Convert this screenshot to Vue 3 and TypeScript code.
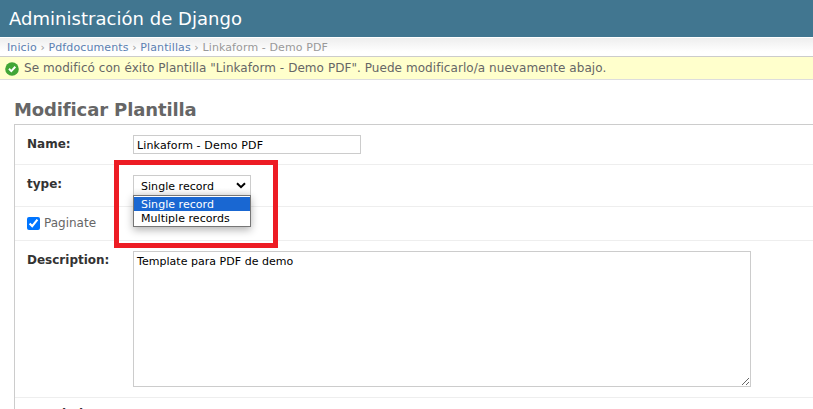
<script setup lang="ts">
import { ref } from 'vue'

const name = ref('Linkaform - Demo PDF')
const description = ref('Template para PDF de demo')
const paginate = ref(true)
const options: string[] = ['Single record', 'Multiple records']
const selected = ref(options[0])
const crumbs: string[] = ['Inicio', 'Pdfdocuments', 'Plantillas']
</script>

<template>
  <div class="page">
    <header class="header"><h1 class="brand">Administración de Django</h1></header>
    <nav class="breadcrumbs">
      <span class="trail"><template v-for="crumb in crumbs" :key="crumb"><a>{{ crumb }}</a> › </template>Linkaform - Demo PDF</span>
    </nav>
    <div class="message">
      <svg class="ok" viewBox="0 0 14 14" width="14" height="14">
        <circle cx="7" cy="7" r="6.8" fill="#41a637" />
        <path d="M4 6.8 6.3 9.1 10.3 4.8" fill="none" stroke="#fff" stroke-width="2" />
      </svg>
      <span class="message-text">Se modificó con éxito Plantilla "Linkaform - Demo PDF". Puede modificarlo/a nuevamente abajo.</span>
    </div>
    <main class="content">
      <h2 class="title"><span>Modificar Plantilla</span></h2>
      <form class="module">
        <div class="row row-name">
          <label class="label">Name:</label>
          <input v-model="name" class="text-input" type="text" spellcheck="false" />
        </div>
        <div class="row row-type">
          <label class="label">type:</label>
          <div class="select">
            <div class="select-box">
              <span class="single">{{ selected }}</span>
              <svg class="chevron" viewBox="0 0 10 7" width="10" height="7">
                <path d="M1 1.2 5 5.2 9 1.2" fill="none" stroke="#000" stroke-width="2" />
              </svg>
            </div>
            <ul class="menu">
              <li v-for="option in options" :key="option" :class="{ active: option === selected }">{{ option }}</li>
            </ul>
            <div class="highlight"></div>
          </div>
        </div>
        <div class="row row-paginate">
          <input v-model="paginate" class="check" type="checkbox" />
          <label class="check-label">Paginate</label>
        </div>
        <div class="row row-description">
          <label class="label">Description:</label>
          <textarea v-model="description" class="area" spellcheck="false"></textarea>
        </div>
        <div class="row row-last">
          <label class="label">margin i:</label>
        </div>
      </form>
    </main>
  </div>
</template>

<style>
body { overflow: hidden; }
</style>

<style scoped>
.page {
  height: 409px;
  overflow: hidden;
  background: #fff;
  color: #666;
  font: 12px/14px "DejaVu Sans", sans-serif;
}
.header { height: 37px; background: #417690; color: #fff; }
.brand { margin: 0; padding: 8px 0 0 9px; font-size: 18px; line-height: 22px; font-weight: 400; letter-spacing: 0.03px; }
.breadcrumbs {
  box-sizing: border-box;
  height: 20px;
  padding: 3px 7px 0;
  border-top: 1px solid #fff;
  border-bottom: 1px solid #ccc;
  background: linear-gradient(#eee, #fff 14px);
  color: #999;
  font-size: 11px;
  line-height: 13px;
  letter-spacing: 0.11px;
  white-space: nowrap;
}
.breadcrumbs a { color: #5b80b2; }
.message {
  box-sizing: border-box;
  display: flex;
  height: 23px;
  padding: 4px 5px 0;
  border-bottom: 1px solid #ddd;
  background: #ffc;
  letter-spacing: 0.058px;
  white-space: nowrap;
}
.ok { flex: none; margin: 1px 5px 0 0; }
.content { padding: 20px 0 0 14px; }
.title { margin: 0; height: 24px; font-size: 18px; line-height: 20px; font-weight: 700; letter-spacing: -0.12px; }
.module { border: 1px solid #ccc; border-width: 1px 0 0 1px; }
.row { box-sizing: border-box; display: flex; padding-left: 12px; border-bottom: 1px solid #eee; }
.row-name { height: 40px; padding-top: 10px; }
.row-type { height: 42px; padding-top: 10px; }
.row-paginate { height: 34px; padding-top: 10px; }
.row-description { height: 157px; padding-top: 10px; }
.row-last { padding-top: 7px; }
.label { flex: none; width: 106px; margin-top: 2px; color: #333; font-weight: 700; }
.text-input, .area {
  box-sizing: border-box;
  margin: 0;
  border: 1px solid #ccc;
  background: #fff;
  color: #000;
  font: 11px/13px "DejaVu Sans", sans-serif;
  outline: none;
}
.text-input { width: 228px; height: 19px; padding: 3px 3px 1px; letter-spacing: 0.14px; }
.area { width: 618px; height: 136px; padding: 3px; letter-spacing: 0.03px; }
.select { position: relative; width: 118px; color: #000; font-size: 11px; letter-spacing: 0.04px; }
.select-box {
  box-sizing: border-box;
  display: flex;
  justify-content: space-between;
  height: 21px;
  padding: 4px 4px 0 7px;
  border: 1px solid #ccc;
  background: linear-gradient(#fff 60%, #f0f0f0);
}
.chevron { margin-top: 2px; }
.menu {
  position: absolute;
  z-index: 1;
  top: 20px;
  left: 0;
  box-sizing: border-box;
  width: 118px;
  height: 32px;
  margin: 0;
  padding: 1px 0 0;
  border: 1px solid #767676;
  background: #fff;
  box-shadow: 0 3px 8px rgba(0, 0, 0, 0.3);
  list-style: none;
}
.menu li { height: 14px; padding-left: 7px; line-height: 16px; white-space: nowrap; }
.menu .active { background: #1967d2; color: #fff; }
.highlight {
  position: absolute;
  z-index: 2;
  top: -15px;
  left: -19px;
  box-sizing: border-box;
  width: 164px;
  height: 88px;
  border: 5px solid #ed1c24;
}
.check { width: 13px; height: 13px; margin: 0 4px 0 0; accent-color: #0075ff; }
.check-label { margin-top: -1px; }
</style>
